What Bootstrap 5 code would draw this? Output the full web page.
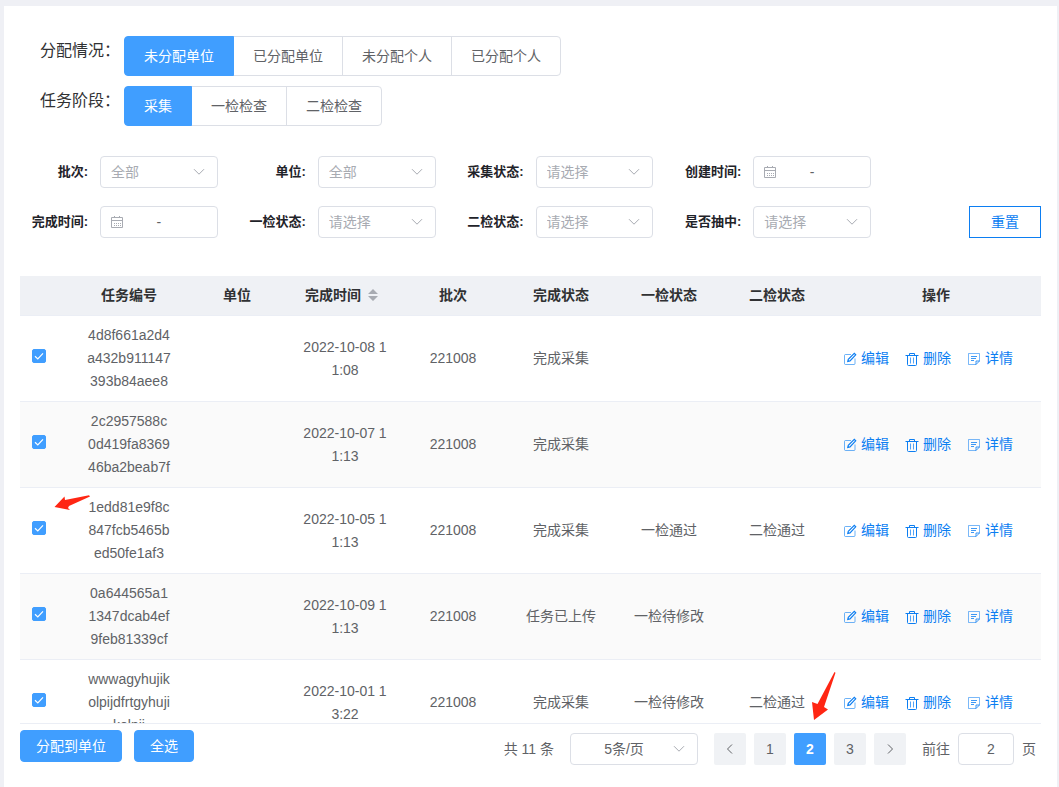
<!DOCTYPE html>
<html lang="zh-CN">
<head>
<meta charset="utf-8">
<meta name="viewport" content="width=device-width, initial-scale=1">
<title>任务分配</title>
<link href="https://cdn.jsdelivr.net/npm/bootstrap@5.3.0/dist/css/bootstrap.min.css" rel="stylesheet">
<style>
  :root { --brand: #409eff; --link: #0c7ef2; --line: #dcdfe6; --soft: #ebeef5; --fill: #f0f2f5; --head: #eff1f5; --ink: #606266; --hint: #a8abb2; }
  body { background: #eff0f5; color: var(--ink); font: 14px/23px "Liberation Sans", "Noto Sans CJK SC", sans-serif; }
  .panel { background: #fff; margin: 6px 2px 0 4px; padding: 30px 16px 20px; min-height: calc(100vh - 6px); }

  .switch-row { padding-left: 20px; gap: 4px; margin-bottom: 10px; }
  .switch-title { width: 80px; font-size: 16px; line-height: 30px; color: #303133; }
  .switch-row .btn { --bs-btn-color: var(--ink); --bs-btn-border-color: var(--line); --bs-btn-border-radius: 4px;
    --bs-btn-hover-color: var(--brand); --bs-btn-hover-border-color: var(--line);
    --bs-btn-active-bg: var(--brand); --bs-btn-active-border-color: var(--brand); --bs-btn-active-color: #fff;
    font-size: 14px; line-height: 22px; padding: 8px 19px; }

  .filters { margin: 30px 0 38px; }
  .filter-grid { display: grid; grid-template-columns: repeat(4, 1fr); gap: 18px 20px; margin-right: 98px; }
  .filter-label { width: 80px; padding-right: 12px; text-align: right; font-size: 13px; font-weight: 700; line-height: 32px; color: #1f2329; white-space: nowrap; }
  .box { height: 32px; border: 1px solid var(--line); border-radius: 4px; font-size: 14px; line-height: 20px; min-width: 0; background-color: #fff; }
  select.box { color: var(--hint); padding: 5px 30px 5px 10px; background-position: right 12px center; background-size: 12px 12px;
    background-image: url("data:image/svg+xml,%3Csvg xmlns='http://www.w3.org/2000/svg' viewBox='0 0 12 12'%3E%3Cpath fill='none' stroke='%23a8abb2' d='M1 3.2l5 5 5-5'/%3E%3C/svg%3E"); }
  .range { padding: 0 9px; color: var(--ink); }
  .range input { border: 0; outline: 0; width: 0; flex: 1 1 0; padding: 0; background: none; font-size: 12px; }
  .range-icon { width: 14px; height: 14px; color: var(--hint); }
  .range::after { content: ""; width: 14px; }
  .btn-reset { --bs-btn-color: var(--link); --bs-btn-border-color: var(--link); --bs-btn-hover-color: #fff; --bs-btn-hover-bg: var(--link);
    --bs-btn-border-radius: 0; width: 72px; height: 32px; font-size: 14px; line-height: 20px; padding: 5px 0; }

  .table-scroll { max-height: 448px; overflow-y: auto; scrollbar-width: none; border-bottom: 1px solid var(--soft); }
  .table-scroll::-webkit-scrollbar { display: none; }
  .tasks { table-layout: fixed; text-align: center; margin: 0; color: var(--ink); }
  .tasks > :not(caption) > * > * { padding: 8px 0; border-bottom: 1px solid var(--soft); color: var(--ink); white-space: nowrap; vertical-align: middle; background: none; box-shadow: none; }
  .tasks > thead > tr > th { background: var(--head); color: #303133; font-weight: 700; }
  .tasks > tbody > tr:nth-child(even) { background: #fafafa; }
  .col-check { width: 55px; }
  .col-data { width: 108px; }
  .tasks > tbody > tr > .pick { text-align: left; padding: 8px 0 13px 12px; position: relative; }
  .pick .form-check-input { display: block; width: 14px; height: 14px; margin: 0; border-radius: 2px; }
  .form-check-input:checked { background-color: var(--brand); border-color: var(--brand); background-size: 14px 14px; background-position: center;
    background-image: url("data:image/svg+xml,%3Csvg xmlns='http://www.w3.org/2000/svg' viewBox='0 0 14 14'%3E%3Cpath fill='none' stroke='%23fff' stroke-width='1.2' d='M3 7.2l2.8 2.7 5.2-5.5'/%3E%3C/svg%3E"); }
  .sort { width: 10px; height: 12px; margin: 0 7px; vertical-align: -1px; fill: var(--hint); }
  .act { display: inline-flex; align-items: center; gap: 4px; margin-right: 16px; color: var(--link); text-decoration: none; vertical-align: top; }
  .act svg { width: 14px; height: 14px; fill: none; stroke: currentColor; stroke-width: 1; margin-top: 1px; }

  .foot { padding-top: 6px; }
  .foot-buttons { gap: 12px; }
  .btn-main { --bs-btn-bg: var(--brand); --bs-btn-border-color: var(--brand); --bs-btn-color: #fff; --bs-btn-hover-bg: #66b1ff; --bs-btn-hover-color: #fff;
    --bs-btn-border-radius: 4px; height: 32px; font-size: 14px; line-height: 20px; padding: 5px 15px; }
  .pager { padding: 3px 5px 0 0; gap: 16px; line-height: 32px; white-space: nowrap; }
  .pager select.box { width: 128px; color: var(--ink); text-align: center; padding-right: 30px; }
  .pagination { gap: 8px; }
  .pagination .page-item { position: relative; }
  .pagination .page-item .page-link { display: flex; align-items: center; justify-content: center; width: 32px; height: 32px; margin: 0; padding: 0; border: 0; border-radius: 2px; background: var(--fill); color: var(--ink); font-size: 14px; line-height: 32px; }
  .pagination .page-item.active .page-link { background: var(--brand); color: #fff; font-weight: 700; }
  .page-link svg { width: 12px; height: 12px; fill: none; stroke: currentColor; }
  .jump { width: 56px; text-align: center; color: var(--ink); padding: 0 0 0 10px; }
  .pointer { position: absolute; fill: #ff2613; pointer-events: none; z-index: 5; }
  .pointer-row { left: 34px; top: 7px; width: 37px; height: 17px; }
  .pointer-page { left: 16px; top: -62px; width: 26px; height: 50px; }
</style>
</head>
<body>
<svg class="d-none" aria-hidden="true">
  <symbol id="i-edit" viewBox="0 0 14 14"><path opacity=".6" d="M8 2.500H2.500a1 1 0 0 0-1 1v8a1 1 0 0 0 1 1H11a1 1 0 0 0 1-1V6.500"/><path stroke-width="1.200" d="M4.800 9.400l.5-2.200L11.300 1.400l1.400 1.400L7 8.900z"/></symbol>
  <symbol id="i-trash" viewBox="0 0 14 14"><path d="M.5 3.500h13M4.500 3.500v-2h5v2M2.500 3.500v9a1 1 0 0 0 1 1h7a1 1 0 0 0 1-1v-9"/><path opacity=".7" d="M5.500 5.500v6M8.500 5.500v6"/></symbol>
  <symbol id="i-note" viewBox="0 0 14 14"><path opacity=".55" d="M12.500 9V1.500h-11v11H9"/><path opacity=".8" d="M12.500 9L9 12.500V9z"/><path opacity=".8" d="M4 4.500h6M4 6.500h5M4 8.500h3"/></symbol>
  <symbol id="i-cal" viewBox="0 0 14 14"><path fill="none" stroke="currentColor" d="M1.500 2.500h11v10h-11zM1.500 5.500h11M4.500 1v2M9.500 1v2"/><path fill="none" stroke="currentColor" stroke-dasharray="1 1" d="M4 8.500h7M4 10.500h7"/></symbol>
</svg>

<main class="panel">
  <div class="switch-row d-flex align-items-start">
    <div class="switch-title" id="t-alloc">分配情况：</div>
    <div class="btn-group" role="group" aria-labelledby="t-alloc">
      <input class="btn-check" type="radio" name="alloc" id="a1" checked><label class="btn" for="a1">未分配单位</label>
      <input class="btn-check" type="radio" name="alloc" id="a2"><label class="btn" for="a2">已分配单位</label>
      <input class="btn-check" type="radio" name="alloc" id="a3"><label class="btn" for="a3">未分配个人</label>
      <input class="btn-check" type="radio" name="alloc" id="a4"><label class="btn" for="a4">已分配个人</label>
    </div>
  </div>
  <div class="switch-row d-flex align-items-start">
    <div class="switch-title" id="t-stage">任务阶段：</div>
    <div class="btn-group" role="group" aria-labelledby="t-stage">
      <input class="btn-check" type="radio" name="stage" id="s1" checked><label class="btn" for="s1">采集</label>
      <input class="btn-check" type="radio" name="stage" id="s2"><label class="btn" for="s2">一检检查</label>
      <input class="btn-check" type="radio" name="stage" id="s3"><label class="btn" for="s3">二检检查</label>
    </div>
  </div>

  <form class="filters d-flex align-items-end">
    <div class="filter-grid flex-grow-1">
      <div class="d-flex"><label class="filter-label flex-shrink-0" for="f1">批次:</label><select class="form-select box" id="f1"><option>全部</option></select></div>
      <div class="d-flex"><label class="filter-label flex-shrink-0" for="f2">单位:</label><select class="form-select box" id="f2"><option>全部</option></select></div>
      <div class="d-flex"><label class="filter-label flex-shrink-0" for="f3">采集状态:</label><select class="form-select box" id="f3"><option>请选择</option></select></div>
      <div class="d-flex"><label class="filter-label flex-shrink-0" for="f4">创建时间:</label><div class="box range d-flex align-items-center flex-grow-1"><svg class="range-icon"><use href="#i-cal"/></svg><input type="text" id="f4"><span>-</span><input type="text" aria-label="创建时间 结束"></div></div>
      <div class="d-flex"><label class="filter-label flex-shrink-0" for="f5">完成时间:</label><div class="box range d-flex align-items-center flex-grow-1"><svg class="range-icon"><use href="#i-cal"/></svg><input type="text" id="f5"><span>-</span><input type="text" aria-label="完成时间 结束"></div></div>
      <div class="d-flex"><label class="filter-label flex-shrink-0" for="f6">一检状态:</label><select class="form-select box" id="f6"><option>请选择</option></select></div>
      <div class="d-flex"><label class="filter-label flex-shrink-0" for="f7">二检状态:</label><select class="form-select box" id="f7"><option>请选择</option></select></div>
      <div class="d-flex"><label class="filter-label flex-shrink-0" for="f8">是否抽中:</label><select class="form-select box" id="f8"><option>请选择</option></select></div>
    </div>
    <button type="reset" class="btn btn-reset flex-shrink-0">重置</button>
  </form>

  <div class="table-scroll">
    <table class="table tasks">
      <colgroup><col class="col-check"><col class="col-data"><col class="col-data"><col class="col-data"><col class="col-data"><col class="col-data"><col class="col-data"><col class="col-data"><col></colgroup>
      <thead><tr><th></th><th>任务编号</th><th>单位</th><th>完成时间<svg class="sort" viewBox="0 0 10 12"><path d="M0 5l5-5 5 5zM0 7h10l-5 5z"/></svg></th><th>批次</th><th>完成状态</th><th>一检状态</th><th>二检状态</th><th>操作</th></tr></thead>
      <tbody>
        <tr><td class="pick"><input class="form-check-input" type="checkbox" aria-label="选择任务 1" checked></td><td>4d8f661a2d4<br>a432b911147<br>393b84aee8</td><td></td><td>2022-10-08 1<br>1:08</td><td>221008</td><td>完成采集</td><td></td><td></td>
          <td><a class="act" href="#"><svg><use href="#i-edit"/></svg>编辑</a><a class="act" href="#"><svg><use href="#i-trash"/></svg>删除</a><a class="act" href="#"><svg><use href="#i-note"/></svg>详情</a></td></tr>
        <tr><td class="pick"><input class="form-check-input" type="checkbox" aria-label="选择任务 2" checked></td><td>2c2957588c<br>0d419fa8369<br>46ba2beab7f</td><td></td><td>2022-10-07 1<br>1:13</td><td>221008</td><td>完成采集</td><td></td><td></td>
          <td><a class="act" href="#"><svg><use href="#i-edit"/></svg>编辑</a><a class="act" href="#"><svg><use href="#i-trash"/></svg>删除</a><a class="act" href="#"><svg><use href="#i-note"/></svg>详情</a></td></tr>
        <tr><td class="pick"><input class="form-check-input" type="checkbox" aria-label="选择任务 3" checked><svg class="pointer pointer-row" viewBox="0 0 37 17"><path d="M.5 12L10.500 1.500l.5 3.500L35 .2l1 1.300L15 11l-1 2 2 2z"/></svg></td><td>1edd81e9f8c<br>847fcb5465b<br>ed50fe1af3</td><td></td><td>2022-10-05 1<br>1:13</td><td>221008</td><td>完成采集</td><td>一检通过</td><td>二检通过</td>
          <td><a class="act" href="#"><svg><use href="#i-edit"/></svg>编辑</a><a class="act" href="#"><svg><use href="#i-trash"/></svg>删除</a><a class="act" href="#"><svg><use href="#i-note"/></svg>详情</a></td></tr>
        <tr><td class="pick"><input class="form-check-input" type="checkbox" aria-label="选择任务 4" checked></td><td>0a644565a1<br>1347dcab4ef<br>9feb81339cf</td><td></td><td>2022-10-09 1<br>1:13</td><td>221008</td><td>任务已上传</td><td>一检待修改</td><td></td>
          <td><a class="act" href="#"><svg><use href="#i-edit"/></svg>编辑</a><a class="act" href="#"><svg><use href="#i-trash"/></svg>删除</a><a class="act" href="#"><svg><use href="#i-note"/></svg>详情</a></td></tr>
        <tr><td class="pick"><input class="form-check-input" type="checkbox" aria-label="选择任务 5" checked></td><td>wwwagyhujik<br>olpijdfrtgyhuji<br>kolpij</td><td></td><td>2022-10-01 1<br>3:22</td><td>221008</td><td>完成采集</td><td>一检待修改</td><td>二检通过</td>
          <td><a class="act" href="#"><svg><use href="#i-edit"/></svg>编辑</a><a class="act" href="#"><svg><use href="#i-trash"/></svg>删除</a><a class="act" href="#"><svg><use href="#i-note"/></svg>详情</a></td></tr>
      </tbody>
    </table>
  </div>

  <div class="foot d-flex justify-content-between align-items-start">
    <div class="foot-buttons d-flex">
      <button type="button" class="btn btn-main">分配到单位</button>
      <button type="button" class="btn btn-main">全选</button>
    </div>
    <div class="pager d-flex align-items-start">
      <span>共 11 条</span>
      <select class="form-select box" aria-label="每页条数"><option>5条/页</option></select>
      <ul class="pagination mb-0">
        <li class="page-item"><a class="page-link" href="#" aria-label="上一页"><svg viewBox="0 0 12 12"><path d="M8 1.500L3.500 6 8 10.500"/></svg></a></li>
        <li class="page-item"><a class="page-link" href="#">1</a></li>
        <li class="page-item active"><a class="page-link" href="#" aria-current="page">2</a><svg class="pointer pointer-page" viewBox="0 0 26 50"><path d="M4 49L2 31l5.500 2L24.500 1l1 .8L14 36l4 2.500z"/></svg></li>
        <li class="page-item"><a class="page-link" href="#">3</a></li>
        <li class="page-item"><a class="page-link" href="#" aria-label="下一页"><svg viewBox="0 0 12 12"><path d="M4 1.500L8.500 6 4 10.500"/></svg></a></li>
      </ul>
      <div class="d-flex gap-2"><label for="jump">前往</label><input class="box jump" id="jump" type="text" inputmode="numeric" value="2"><span>页</span></div>
    </div>
  </div>
</main>
<script src="https://cdn.jsdelivr.net/npm/bootstrap@5.3.0/dist/js/bootstrap.bundle.min.js"></script>
</body>
</html>
